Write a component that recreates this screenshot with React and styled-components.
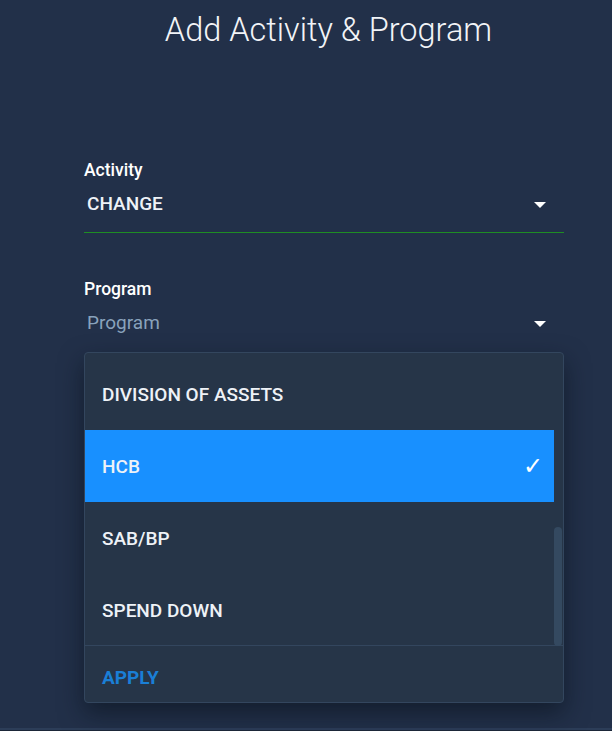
import React from "react";
import styled, { createGlobalStyle } from "styled-components";

const GlobalStyle = createGlobalStyle`
  html, body {
    margin: 0;
    padding: 0;
    background: #1b2638;
  }
  * { box-sizing: border-box; }
`;

const Modal = styled.div`
  height: 730px;
  background: #223049;
  border-bottom: 2px solid #2c3d58;
  font-family: Roboto, "Liberation Sans", sans-serif;
  color: #eef2f7;
`;

const Title = styled.h2`
  margin: 0;
  height: 60px;
  line-height: 60px;
  padding-left: 84px;
  width: 573px;
  text-align: center;
  font-size: 32.5px;
  font-weight: 300;
  color: #f2f4f7;
`;

const Form = styled.div`
  width: 480px;
  margin-left: 84px;
  padding-top: 100px;
`;

const Field = styled.div`
  position: relative;
  margin-bottom: ${(p) => p.$gap || 0}px;
`;

const Label = styled.div`
  height: 20px;
  line-height: 20px;
  font-size: 17.5px;
  font-weight: 500;
  color: #ffffff;
`;

const Select = styled.div`
  display: flex;
  align-items: center;
  justify-content: space-between;
  height: ${(p) => (p.$underline ? 41 : 40)}px;
  padding: 0 18px 16px 3px;
  margin-top: 12px;
  border-bottom: ${(p) => (p.$underline ? "1px solid #1f8d24" : "none")};
`;

const Value = styled.span`
  line-height: 24px;
  font-size: 19px;
  font-weight: ${(p) => (p.$placeholder ? 400 : 500)};
  color: ${(p) => (p.$placeholder ? "#89a2bc" : "#eef2f7")};
`;

const Caret = styled.span`
  width: 0;
  height: 0;
  border-left: 6px solid transparent;
  border-right: 6px solid transparent;
  border-top: 6px solid #ffffff;
  margin-top: 2px;
`;

const Menu = styled.div`
  position: absolute;
  left: 0;
  right: 0;
  top: 73px;
  background: #263548;
  border: 1px solid #33465e;
  border-radius: 4px;
  box-shadow: 0 10px 24px rgba(8, 14, 24, 0.55);
  overflow: hidden;
`;

const List = styled.div`
  position: relative;
  height: 293px;
  padding: 5px 9px 0 0;
  border-bottom: 1px solid #33465e;
`;

const Option = styled.div`
  display: flex;
  align-items: center;
  justify-content: space-between;
  height: 72px;
  padding: 0 11px 0 17px;
  font-size: 19px;
  font-weight: 500;
  color: #eef2f7;
  background: ${(p) => (p.$selected ? "#1890ff" : "transparent")};
`;

const Check = styled.span`
  font-size: 24px;
  font-weight: 700;
  color: #ffffff;
  font-family: "DejaVu Sans", sans-serif;
`;

const ScrollThumb = styled.div`
  position: absolute;
  right: 1px;
  top: 174px;
  width: 8px;
  height: 119px;
  border-radius: 4px;
  background: #344960;
`;

const Footer = styled.div`
  height: 56px;
  display: flex;
  align-items: center;
  padding: 7px 0 0 17px;
`;

const ApplyButton = styled.button`
  border: none;
  background: none;
  padding: 0;
  font-family: inherit;
  font-size: 19px;
  font-weight: 700;
  color: #1a7fd6;
  cursor: pointer;
`;

const options = ["DIVISION OF ASSETS", "HCB", "SAB/BP", "SPEND DOWN"];

export default function App() {
  const selected = "HCB";
  return (
    <>
      <GlobalStyle />
      <Modal>
        <Title>Add Activity &amp; Program</Title>
        <Form>
          <Field $gap={46}>
            <Label>Activity</Label>
            <Select $underline>
              <Value>CHANGE</Value>
              <Caret />
            </Select>
          </Field>
          <Field>
            <Label>Program</Label>
            <Select>
              <Value $placeholder>Program</Value>
              <Caret />
            </Select>
            <Menu>
              <List>
                {options.map((o) => (
                  <Option key={o} $selected={o === selected}>
                    {o}
                    {o === selected && <Check>✓</Check>}
                  </Option>
                ))}
                <ScrollThumb />
              </List>
              <Footer>
                <ApplyButton>APPLY</ApplyButton>
              </Footer>
            </Menu>
          </Field>
        </Form>
      </Modal>
    </>
  );
}
